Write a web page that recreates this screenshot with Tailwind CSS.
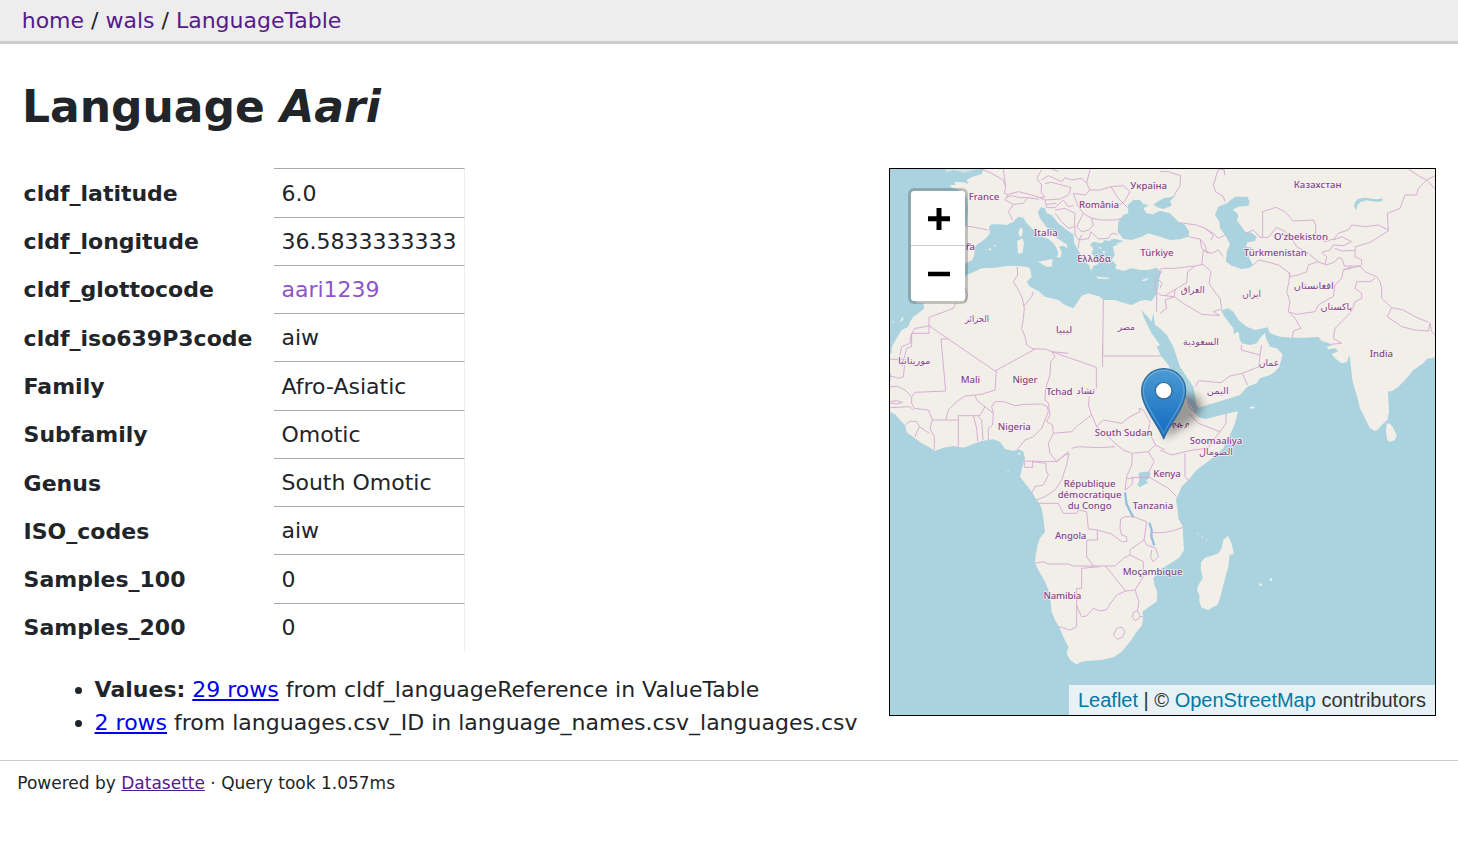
<!DOCTYPE html>
<html lang="en">
<head>
<meta charset="utf-8">
<title>Language Aari</title>
<script src="https://cdn.jsdelivr.net/npm/@tailwindcss/browser@4"></script>
</head>
<body class="bg-white text-[#212529] font-['DejaVu_Sans',sans-serif] text-[22px] leading-[33px] overflow-hidden">
<header class="h-[44px] bg-[#ededed] border-b-[3px] border-[#ccc] pl-[21.7px] pt-[4px] text-[#212529]"><a class="text-[#551a8b]">home</a> / <a class="text-[#551a8b]">wals</a> / <a class="text-[#551a8b]">LanguageTable</a></header>
<main class="pl-[22px] pr-[22px] pt-[35px] h-[716px]">
<h1 class="text-[44px] leading-[55px] font-bold">Language <i>Aari</i></h1>
<div class="flex justify-between mt-[34px]">
<section class="pt-[0.3px]">
<div class="grid grid-cols-[252px_191px] w-[443px] [&>b]:pl-[1.6px] [&>b]:pt-[8.66px] [&>b]:h-[48.28px] [&>span]:h-[48.28px] [&>span]:pl-[7.5px] [&>span]:pt-[7.22px] [&>span]:border-t [&>span]:border-t-[#aaa] [&>span]:border-r [&>span]:border-r-[#eee]">
<b>cldf_latitude</b><span>6.0</span>
<b>cldf_longitude</b><span>36.5833333333</span>
<b>cldf_glottocode</b><span><a class="text-[#8f54c9]">aari1239</a></span>
<b>cldf_iso639P3code</b><span>aiw</span>
<b>Family</b><span>Afro-Asiatic</span>
<b>Subfamily</b><span>Omotic</span>
<b>Genus</b><span>South Omotic</span>
<b>ISO_codes</b><span>aiw</span>
<b>Samples_100</b><span>0</span>
<b>Samples_200</b><span>0</span>
</div>
<ul class="list-disc pl-[72.6px] mt-[21.9px] whitespace-nowrap">
<li><b>Values:</b> <a class="text-[#0000ee] underline">29 rows</a> from cldf_languageReference in ValueTable</li>
<li><a class="text-[#0000ee] underline">2 rows</a> from languages.csv_ID in language_names.csv_languages.csv</li>
</ul>
</section>
<div class="relative w-[547px] h-[548px] border border-black overflow-hidden shrink-0">
<svg class="block w-[545px] h-[546px]" viewBox="15 12 1635 1638" preserveAspectRatio="none">
<defs>
<linearGradient id="pin" x1="0" y1="0" x2="0" y2="1"><stop offset="0" stop-color="#4c9bd3"/><stop offset="1" stop-color="#1069c0"/></linearGradient>
<filter id="soft" x="-40%" y="-40%" width="180%" height="180%"><feGaussianBlur stdDeviation="13"/></filter>
</defs>
<rect width="1700" height="1700" fill="#f2efe9"/>
<g fill="#aad3df">
<!-- north Atlantic -->
<path d="M0 0H300L290 28 262 35 245 45 250 56 235 52 208 50 212 60 195 60 200 68 215 72 235 80 246 100 249 130 246 180 200 180 100 175 95 415 115 415 118 430 100 445 85 455 75 470 70 485 50 495 35 520 20 545 15 560 22 560 0 580Z"/>
<path d="M180 12L185 22 207 16 240 24 275 12Z" fill="#f2efe9" opacity=".5"/>
<path d="M15 540H22L19 560 15 570ZM15 620L19 632 15 652Z"/>
<!-- south Atlantic, Indian Ocean, Red Sea, Persian Gulf -->
<path d="M0 735L15 740 30 748 42 762 60 780 65 802 90 820 110 835 130 845 150 858 175 848 205 843 235 848 265 837 290 828 325 823 345 830 360 852 385 858 400 852 415 860 420 880 412 905 405 935 420 955 440 980 455 1005 462 1015 470 1030 475 1060 480 1100 465 1120 458 1140 452 1170 450 1195 465 1225 480 1250 490 1275 497 1310 500 1340 510 1365 522 1385 535 1415 550 1445 545 1465 555 1485 575 1498 590 1490 610 1487 650 1485 685 1477 710 1460 735 1430 755 1400 770 1382 775 1357 772 1340 800 1320 815 1310 817 1280 808 1260 805 1240 830 1210 865 1190 885 1175 897 1155 895 1125 893 1085 880 1060 877 1030 873 1005 883 980 890 965 910 945 935 915 975 885 1015 850 1035 810 1050 775 1059 739 1030 745 990 755 960 762 940 755 930 745 920 725 905 705 885 680 868 640 850 600 828 572 815 545 825 540 800 505 780 465 768 435 785 452 800 470 805 443 810 480 825 490 845 510 865 545 875 575 885 605 905 635 925 665 930 690 933 715 940 728 975 718 1025 703 1065 690 1087 665 1115 655 1125 640 1155 630 1170 620 1183 605 1193 568 1175 550 1155 545 1143 520 1140 503 1125 520 1115 535 1095 540 1070 535 1063 520 1062 505 1055 500 1047 510 1045 490 1030 470 1015 450 1008 435 1022 432 1030 430 1045 440 1060 465 1085 485 1110 495 1135 490 1148 487 1155 505 1185 515 1225 518 1265 518 1300 515 1310 528 1330 533 1340 542 1325 545 1330 553 1350 550 1360 558 1340 568 1350 580 1370 595 1385 592 1394 570 1397 600 1403 650 1415 690 1425 730 1440 760 1455 790 1470 798 1480 793 1490 780 1507 765 1512 740 1509 680 1522 678 1540 665 1565 640 1585 615 1615 595 1625 582 1660 575V1700H0Z"/>
<!-- Mediterranean and Adriatic -->
<path d="M235 320V300L248 292 262 285 268 270 268 250 275 240 300 222 315 205 312 185 320 178 345 178 365 180 385 170 400 155 415 158 425 175 440 190 455 205 470 215 490 222 505 235 515 250 520 265 515 280 528 275 530 262 522 245 535 242 548 250 545 238 520 222 505 212 495 200 480 180 465 160 458 140 468 127 480 130 485 145 500 150 520 175 545 195 565 208 568 235 580 255 590 275 600 290 612 300 618 318 625 303 640 297 630 280 620 265 625 250 615 240 625 230 650 235 660 225 685 232 700 238 683 245 690 270 680 285 695 300 690 310 715 318 740 310 765 315 790 315 815 308 828 320 822 345 820 370 812 390 800 408 780 405 765 408 740 420 710 412 690 405 655 405 645 395 610 385 590 392 575 415 565 430 540 420 520 405 480 395 460 378 435 365 425 350 440 335 435 310 425 305 400 303 370 302 330 308 290 310 265 322 245 330 235 345Z"/>
<path d="M672 225L690 221 715 228 700 235 680 234Z"/>
<!-- Black Sea, Sea of Azov -->
<path d="M698 200L700 170 715 150 730 145 728 120 745 105 765 105 775 117 792 120 775 130 785 145 805 148 825 137 855 145 880 170 900 180 913 200 910 215 885 223 855 225 825 215 790 205 770 215 740 225 715 222Z"/>
<path d="M805 118L835 100 855 97 873 90 855 108 860 122 835 132 815 126Z"/>
<!-- Caspian, Balkhash, Victoria -->
<path d="M990 150L1000 125 1025 115 1050 95 1087 95 1094 110 1090 122 1060 125 1043 135 1057 145 1060 155 1055 165 1070 185 1080 200 1100 203 1115 215 1110 228 1087 232 1083 245 1103 248 1087 262 1095 285 1105 300 1095 308 1070 312 1040 302 1023 290 1025 260 1035 237 1020 210 1005 190 1003 170Z"/>
<path d="M1415 136L1407 124 1410 112 1420 101 1440 98 1475 103 1493 100 1493 107 1475 111 1445 106 1425 112 1417 122Z"/>
<path d="M760 925L775 920 793 920 795 937 783 947 790 953 775 960 765 967 757 960 763 945Z"/>
</g>
<g fill="#f2efe9">
<path d="M410 187L414 200 408 217 400 208 402 195ZM396 228L412 220 417 235 413 263 399 266ZM459 290L475 287 503 282 500 305 485 305ZM632 334L650 337 672 338 670 342 640 341ZM770 345L792 338 785 346 775 349ZM307 254L317 249 319 255ZM325 240L334 241 328 245ZM650 258L660 258 658 268ZM668 290L676 288 672 296ZM640 245L650 248 645 252ZM45 468L52 457 57 458 50 470ZM20 470L27 469 25 474Z"/>
<path d="M1505 775L1515 776 1525 790 1535 810 1530 825 1515 831 1507 826 1503 800ZM1093 727L1105 724 1110 728 1098 732ZM398 868L405 860 406 870ZM366 919L371 917 371 923Z"/>
<path d="M1029 1112L1038 1130 1043 1150 1046 1165 1040 1172 1038 1165 1033 1175 1031 1200 1015 1260 1005 1300 997 1320 980 1328 970 1335 950 1328 943 1310 943 1290 936 1275 940 1260 953 1240 947 1210 949 1190 960 1178 980 1172 1000 1165 1010 1150 1015 1125Z"/>
<circle cx="1127" cy="1259" r="4"/><circle cx="1158" cy="1244" r="4"/><circle cx="1248" cy="1234" r="2" opacity=".5"/><circle cx="938" cy="1106" r="2"/><circle cx="952" cy="1116" r="2"/><circle cx="965" cy="1125" r="2"/>
</g>
<g fill="none" stroke="#93bfe2" stroke-width="7" stroke-linejoin="round"><path d="M720 982L725 1018 735 1038 745 1057M793 1073L800 1095 799 1115 808 1142"/></g>
<g fill="none" stroke="#d6a9d3" stroke-width="2.8" stroke-linejoin="round">
<path d="M290 12L320 25 355 45 362 65 358 85 370 90 360 105 385 118 370 140 383 165M355 12L362 65M370 88L400 80 440 90 465 98 480 95 468 82 470 60 455 40 470 15M362 97L380 92 405 98 428 98 415 115 385 118M428 98L462 103M480 55L500 52 530 60 558 68 550 90 525 102 480 105 465 98M470 45L490 32 530 50 540 38 560 45 590 40 605 55 615 75 600 90 565 85M615 12L605 55M520 20L500 12M480 105L485 128 510 128 535 105 550 125 565 122M485 118L515 115M510 135L540 130 570 145 568 185 550 190 530 170 510 145M565 85L570 100 580 125 595 145 620 160 650 165 690 165 710 160M615 75L645 75 678 65 700 100 715 115 728 128M678 65L715 62 735 80 718 110 703 120M595 145L585 165 575 185 590 200 612 195 625 180 620 160M570 185L570 210 583 225 590 210M583 225L580 250M585 225L612 220 618 200 640 222 670 220 680 205 698 208M238 182L270 187 310 195M397 305L398 330 385 350 400 375 412 400 418 430 415 460 410 490 420 515 425 540M445 380L440 395 415 425M655 405L653 573M653 540V607M240 370L248 390 240 410M212 415L205 430 165 445 132 457V505H80V545L65 550 55 590M132 482L105 488 90 490 78 510 75 535 50 545 45 570M132 482L190 522H168L182 678M190 522L330 618M425 540L445 552 482 552 500 560 550 565M445 552L450 552 330 618M500 560L634 607M655 573L830 573"/>
<path d="M825 310L830 320 815 340 810 360 815 380 825 390 840 392 870 374 905 353 908 320 930 303M822 345L832 355 825 370M830 310L870 310 930 303 955 298M840 392L868 395 870 372M868 395L895 415 950 448 1005 452M825 445L845 430 840 405 868 395M815 380V440M955 298L978 320 972 355 985 375 1005 400 1010 430M1005 452L985 440 1010 432M825 20L850 20 887 32 885 62 868 90M1000 12L985 60 992 80 1015 95 1020 110M1000 12L1018 15 1019 30M885 173L935 180 960 190 985 205 1000 220 1020 210M910 215L945 222 960 240 965 260 980 265 1000 255 1015 275M960 190L985 210 978 225M945 222L950 250 970 265 955 255 950 300M1083 205L1105 195 1125 217 1150 217 1175 187 1200 200 1215 215 1235 245 1270 265 1300 290M1133 215V140L1173 127 1200 140 1225 168 1285 165 1292 180V205L1320 230 1345 222M1105 300L1120 285 1145 290 1180 300 1210 322 1215 335 1240 330 1265 320 1270 300 1298 290 1325 300 1350 290 1360 278 1370 280 1378 303 1430 303M1215 322L1212 350 1205 380 1215 410 1210 440 1230 460 1248 490 1225 498 1222 518M1210 440L1235 448 1290 440 1300 420 1325 405 1345 395 1350 360 1370 340 1375 315 1400 305M1375 315L1425 303 1440 320 1475 335 1485 350 1490 370 1490 400 1520 428 1555 435 1590 455 1630 472M1470 340L1455 350 1415 350 1410 370 1430 385 1430 400 1410 410 1400 440 1375 465 1350 490 1345 520 1370 535 1335 538M1520 428L1507 455 1550 485 1590 495 1630 498 1635 475 1640 500 1650 510M1345 225L1360 205 1390 195 1400 180 1440 185 1480 180 1510 195M1345 225L1370 215 1400 230 1375 242 1345 240 1335 255 1310 262 1325 275 1320 300M1350 250L1370 258 1410 256 1412 245 1455 232 1510 198 1507 145 1545 130 1560 90 1595 90 1600 70 1625 45 1605 35 1570 12M1625 45L1650 32M1625 45L1650 72M1410 256V275L1430 285V300M1070 540L1068 555 1125 570 1130 540M1125 570L1122 605 1072 625 1035 633 1008 653 940 647 932 665M1072 625L1088 660"/>
<path d="M15 583H60M60 590L55 635 40 640 15 632M182 678L90 682 80 695 60 675 40 665 15 665M15 710L35 707 52 712 35 717 15 714M15 728L75 725 85 735M80 695L80 715 88 730 130 735 142 765H220M142 765L135 790 148 815 148 855M62 780L75 768 95 770 103 785 90 815M103 785L133 805M182 765L190 735 215 710 240 693 272 690 290 688 330 675 334 618M220 845V752H285L300 725 275 705 270 690M265 752L275 790 278 830M278 752L290 765 294 825M300 725L325 745 323 780 310 790V825M325 745L320 725 330 710 355 710 390 722 420 718 470 717 487 725 490 740 470 790 445 815 420 825 400 850M500 560L510 575 497 590 495 630 482 670 480 705 490 715 495 750 485 770 503 780 505 805 560 800 580 780 620 750 610 720 613 695M634 607V670M505 805L490 835 495 865 515 890 540 870 552 865M515 890L418 888V907H443V888M443 890L483 895 483 915 490 930 475 960 450 965 440 985M515 890L550 860M552 865L545 900 530 945 510 975 480 995 455 1005M620 750L635 785 665 810 690 835 715 855 742 865 790 860 812 840M635 785L655 765 710 775 735 755 765 740 762 730 775 735 795 770 790 800 812 840 840 855M690 845L640 848 580 845 560 850M742 865L740 900 725 935 720 975 740 960 745 940 725 940M790 860L808 890 792 918V930M740 937H793L850 970 875 995M825 855L860 870 900 860 925 855 965 850 985 832M900 865V935L913 950M905 690L935 725 930 745M912 745L940 775 1005 800 1023 775V745M1005 800L985 825M885 675L905 700 915 730 930 742M455 1015L520 1015 535 1045 575 1045 580 1035 605 1040 610 1092 637 1095V1125H605V1175L627 1205M637 1095L680 1107 710 1130 725 1130V1115L710 1110 705 1090 707 1062 720 1055 745 1055 785 1070 777 1125 735 1155V1170M777 1125L785 1140 812 1150 820 1175 805 1190 797 1178 800 1155M800 1103H835L865 1097 893 1087M450 1195L475 1190 490 1197 550 1197 565 1203 630 1203 660 1203 690 1203 715 1180 735 1170 775 1190 775 1235 750 1275 722 1278 695 1245 680 1225 660 1202M590 1210L645 1205M590 1210V1270H575V1385L555 1395 530 1387 520 1385M575 1320L580 1335 590 1355 605 1353 625 1330 645 1338 665 1334 680 1310 695 1290 722 1278M750 1275L762 1310 757 1337M757 1337L745 1342 742 1355 750 1367 762 1360 765 1352 757 1337M685 1410L695 1390 710 1386 720 1400 712 1417 697 1423ZM765 1355H775"/>
</g>
<g fill="#854586" stroke="#f8f4f6" stroke-opacity=".85" stroke-width="5" stroke-linejoin="round" paint-order="stroke" text-anchor="middle" font-family="'Noto Sans','Open Sans',sans-serif" font-weight="500" font-size="29">
<text x="297" y="105" textLength="92">France</text><text x="642" y="128" textLength="120">România</text><text x="482" y="214" textLength="72">Italia</text><text x="627" y="290" textLength="101">Ελλάδα</text><text x="256" y="254" textLength="28">ña</text><text x="791" y="73" textLength="110">Україна</text><text x="816" y="273" textLength="100">Türkiye</text><text x="1298" y="70" textLength="144">Казахстан</text><text x="1248" y="225" textLength="162">O‘zbekiston</text><text x="1171" y="274" textLength="189">Türkmenistan</text><text x="1489" y="577" textLength="70">India</text>
<text x="256" y="654" textLength="58">Mali</text><text x="420" y="655" textLength="75">Niger</text><text x="523" y="689" textLength="79">Tchad</text><text x="388" y="794" textLength="99">Nigeria</text><text x="716" y="812" textLength="174">South Sudan</text><text x="846" y="937" textLength="82">Kenya</text><text x="614" y="965" textLength="156">République</text><text x="614" y="998" textLength="192">démocratique</text><text x="614" y="1031" textLength="132">du Congo</text><text x="804" y="1033" textLength="121">Tanzania</text><text x="557" y="1121" textLength="94">Angola</text><text x="803" y="1231" textLength="179">Moçambique</text><text x="532" y="1302" textLength="113">Namibia</text><text x="993" y="837" textLength="158">Soomaaliya</text>
<g font-size="28" font-family="'DejaVu Sans',sans-serif">
<text x="276" y="472" textLength="72" lengthAdjust="spacingAndGlyphs">الجزائر</text><text x="537" y="503" textLength="50" lengthAdjust="spacingAndGlyphs">ليبيا</text><text x="724" y="495" textLength="52" lengthAdjust="spacingAndGlyphs">مصر</text><text x="923" y="385" textLength="72" lengthAdjust="spacingAndGlyphs">العراق</text><text x="1100" y="397" textLength="56" lengthAdjust="spacingAndGlyphs">ایران</text><text x="1286" y="371" textLength="120" lengthAdjust="spacingAndGlyphs">افغانستان</text><text x="1354" y="435" textLength="95" lengthAdjust="spacingAndGlyphs">پاکستان</text><text x="948" y="541" textLength="108" lengthAdjust="spacingAndGlyphs">السعودية</text><text x="88" y="598" textLength="98" lengthAdjust="spacingAndGlyphs">موريتانيا</text><text x="602" y="687" textLength="56" lengthAdjust="spacingAndGlyphs">تشاد</text><text x="1152" y="604" textLength="62" lengthAdjust="spacingAndGlyphs">عمان</text><text x="998" y="687" textLength="66" lengthAdjust="spacingAndGlyphs">اليمن</text><text x="993" y="869" textLength="102" lengthAdjust="spacingAndGlyphs">الصومال</text>
</g>
<text x="887" y="789" font-size="24" textLength="52" stroke-width="3" lengthAdjust="spacingAndGlyphs">ዮጵያ</text>
</g>
<!-- marker shadow and pin -->
<path d="M838 822L855 740 890 690 935 690 955 725 930 765Z" fill="#000" opacity=".36" filter="url(#soft)"/>
<path d="M836 822C828 790 770 730 770 677A66 66 0 0 1 902 677C902 730 844 790 836 822Z" fill="url(#pin)" stroke="#2e6c97" stroke-width="4"/>
<path d="M836 806C828 780 775 720 775 677A61 61 0 0 1 897 677C897 720 844 780 836 806Z" fill="none" stroke="#fff" stroke-opacity=".2" stroke-width="4"/>
<circle cx="836" cy="677" r="25" fill="#fff" stroke="#2e6c97" stroke-width="4"/>
</svg>
<div class="absolute left-[18px] top-[19px] w-[60px] h-[116px] rounded-[6px] border-[3px] border-black/20 bg-clip-padding overflow-hidden bg-white">
<div class="h-[55px] border-b border-[#ccc] flex items-center justify-center pl-[2px] pt-[2px]"><svg class="w-[22px] h-[22px]" viewBox="0 0 22 22"><path d="M0 8.3H8.5V0H13.5V8.3H22V13.3H13.5V22H8.5V13.3H0Z"/></svg></div>
<div class="h-[55px] flex items-center justify-center pl-[2px]"><svg class="w-[22px] h-[22px]" viewBox="0 0 22 22"><path d="M0 8.7H22V13.3H0Z"/></svg></div>
</div>
<div class="absolute right-0 bottom-0 h-[30px] w-[366px] bg-white/70 pl-[9px] whitespace-nowrap font-['Liberation_Sans',sans-serif] text-[20px] leading-[30px] text-[#333]"><a class="text-[#0078a8]">Leaflet</a> | © <a class="text-[#0078a8]">OpenStreetMap</a> contributors</div>
</div>
</div>
</main>
<footer class="border-t border-[#ccc] pl-[17.3px] pt-[9px] text-[17px] leading-[26px]">Powered by <a class="text-[#551a8b] underline">Datasette</a> · Query took 1.057ms</footer>
</body>
</html>
